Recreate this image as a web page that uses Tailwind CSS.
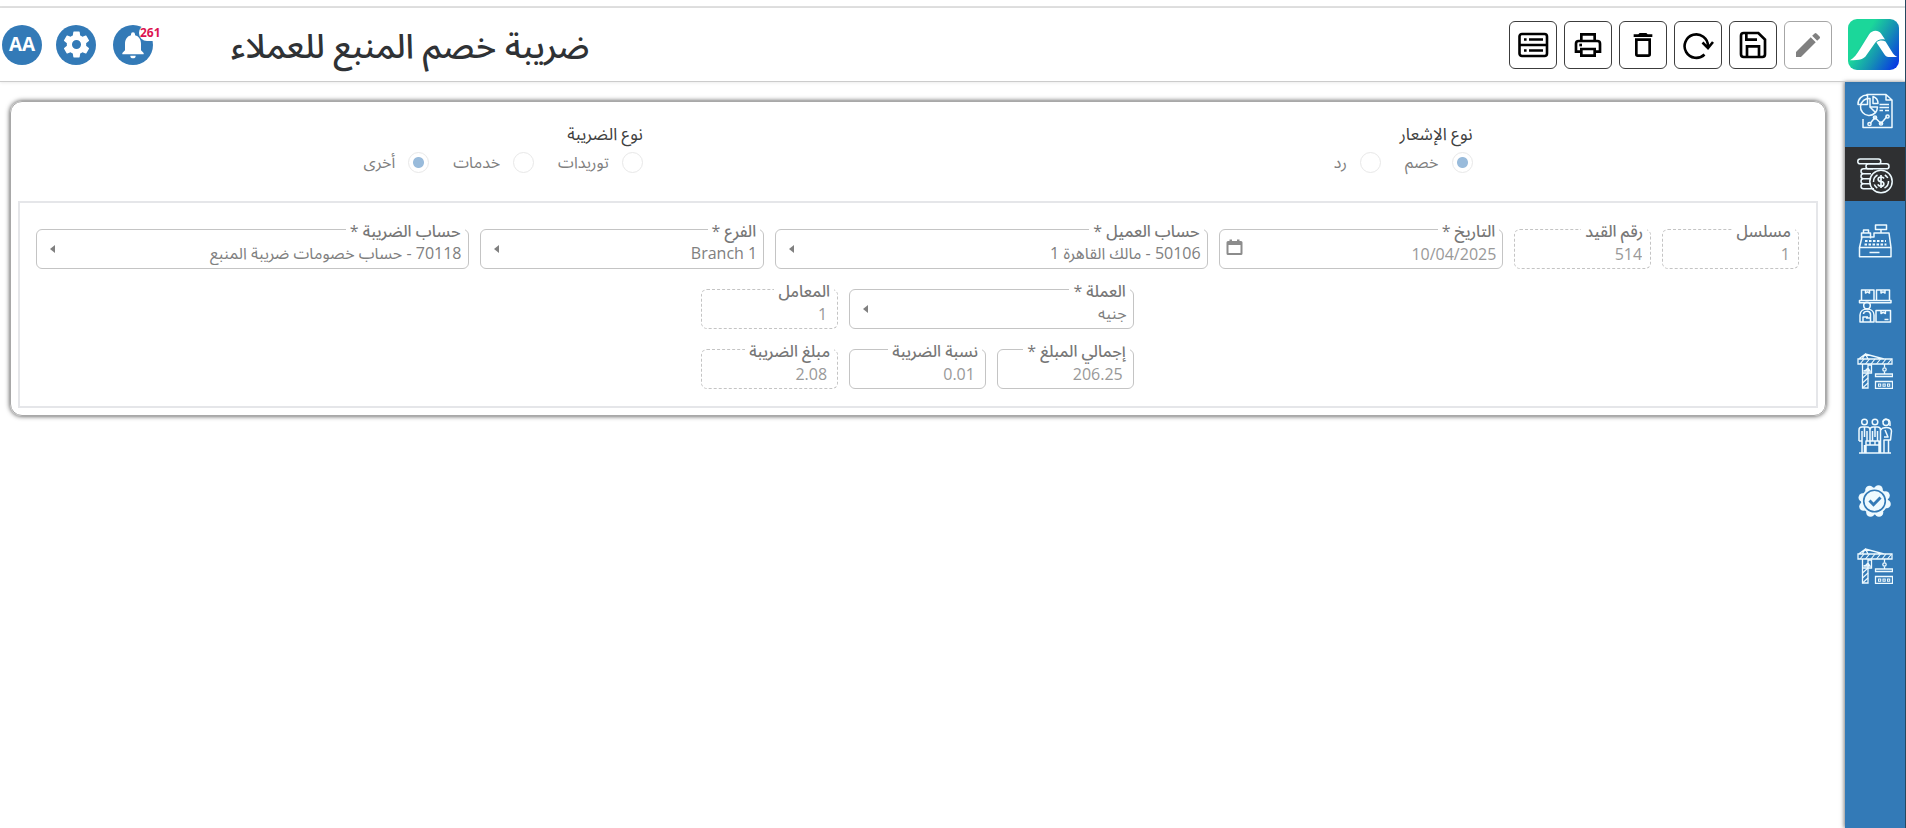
<!DOCTYPE html>
<html lang="ar" dir="rtl">
<head>
<meta charset="utf-8">
<meta name="viewport" content="width=device-width, initial-scale=1">
<title>ضريبة خصم المنبع للعملاء</title>
<script src="https://cdn.jsdelivr.net/npm/@tailwindcss/browser@4"></script>
</head>
<body class="flex min-h-screen flex-col border-r border-[#27485f] bg-white font-['Open_Sans','Noto_Sans_Arabic','DejaVu_Sans',sans-serif] text-[16px] text-[#808080]">

<!-- shared symbols -->
<svg class="hidden" aria-hidden="true">
  <symbol id="crane" viewBox="0 0 36 36" fill="none" stroke="currentColor" stroke-width="1.300">
    <path d="M1 6h34v5H1z M5 6 8.500 1 11 6 M1 6.500 8.500 1 27 6"/>
    <path stroke-width="1.100" d="M3 11l4-5M8.500 11l4-5M14 11l4-5M19.500 11l4-5M25 11l4-5M30.500 11l4-5"/>
    <path d="M5.500 11V35H11V11M11 12h3.500v8H5.500M6.500 18h6.500l-2-3-2 2z"/>
    <path stroke-width="1.100" d="M5.500 25 11 20M5.500 30 11 25M5.500 35 11 30"/>
    <path d="M27.500 11V14.500M27.500 18.500v2.500"/><circle cx="27.500" cy="16.500" r="1.700"/>
    <path d="M18.500 21h17v2.500h-17zM18.500 28.500h17v7h-17z"/>
    <path stroke-width="1.100" d="M21.500 31h2.200v2.200h-2.200zM26 31h2.200v2.200H26zM30.500 31h2.200v2.200h-2.200z"/>
  </symbol>
</svg>

<div class="h-2 border-b-2 border-[#e0e0e0]"></div>

<header class="z-10 flex h-[74px] items-center border-b border-[#cccccc] px-[2px] shadow-[0_1px_3px_rgba(0,0,0,0.08)]">
  <a href="#" aria-label="الرئيسية" class="ms-[4px] block">
    <svg class="size-[51px]" viewBox="0 0 51 51">
      <defs>
        <linearGradient id="lg" x1="0" y1=".25" x2="1" y2=".85"><stop offset=".28" stop-color="#1bd79a"/><stop offset=".62" stop-color="#1590b4"/><stop offset="1" stop-color="#0838e4"/></linearGradient>
      </defs>
      <rect width="51" height="51" rx="9" fill="url(#lg)"/>
      <path d="M2 41.300C6 39 9 35 12 30L21 15.500C24 11 30 10.500 33 14.500L37 20.500C33 19.500 29 20.500 27 24L18.500 36C16 40 12 41.300 2 41.300Z" fill="#fff"/>
      <path d="M28.500 23.500C30.500 21.300 34.500 21 37.500 22.500L45 34.500C46.500 36.500 48 37.500 49.500 38H40.500C38.500 38 37.500 37 36.500 35.500Z" fill="#fff"/>
    </svg>
  </a>
  <div class="ms-4 flex gap-[7px]">
    <button type="button" disabled aria-label="تعديل" class="grid size-12 place-items-center rounded-md border border-[#a6a6a6] text-[#808080]">
      <svg class="size-8" viewBox="0 0 24 24" fill="currentColor"><path d="M3 17.250V21h3.750L17.810 9.940l-3.750-3.750zM20.710 7.040a1 1 0 0 0 0-1.410l-2.340-2.340a1 1 0 0 0-1.410 0l-1.830 1.830 3.750 3.750z"/></svg>
    </button>
    <button type="button" aria-label="حفظ" class="grid size-12 place-items-center rounded-md border border-[#3c3c3c] text-black">
      <svg class="size-8" viewBox="0 0 24 24" fill="none" stroke="currentColor" stroke-width="2"><path d="M5 3h11l5 5v11a2 2 0 0 1-2 2H5a2 2 0 0 1-2-2V5a2 2 0 0 1 2-2z"/><path d="M7 3v5h8M7.500 21v-8h9v8"/></svg>
    </button>
    <button type="button" aria-label="تحديث" class="grid size-12 place-items-center rounded-md border border-[#3c3c3c] text-black">
      <svg class="size-8" viewBox="0 0 32 32" fill="none" stroke="currentColor" stroke-width="2.600"><path d="M22.500 25.500A11.700 11.700 0 1 1 26 17M20.500 13.500 26 19l5-6" /></svg>
    </button>
    <button type="button" aria-label="حذف" class="grid size-12 place-items-center rounded-md border border-[#3c3c3c] text-black">
      <svg class="size-8" viewBox="0 0 24 24" fill="currentColor"><path d="M6 19a2 2 0 0 0 2 2h8a2 2 0 0 0 2-2V7H6zM8 9h8v10H8zm7.500-5-1-1h-5l-1 1H5v2h14V4z"/></svg>
    </button>
    <button type="button" aria-label="طباعة" class="grid size-12 place-items-center rounded-md border border-[#3c3c3c] text-black">
      <svg class="size-8" viewBox="0 0 24 24" fill="none" stroke="currentColor" stroke-width="2"><path d="M7 8V4h10v4M7 17H3v-6a2 2 0 0 1 2-2h14a2 2 0 0 1 2 2v6h-4M7 15h10v5H7z"/><path d="M5.500 12h2"/></svg>
    </button>
    <button type="button" aria-label="القائمة" class="grid size-12 place-items-center rounded-md border border-[#3c3c3c] text-black">
      <svg class="size-8" viewBox="0 0 32 32" fill="none" stroke="currentColor" stroke-width="2.600"><rect x="2.500" y="5" width="27.500" height="22" rx="2.500"/><path d="M3 16h27M7 10.500h2.600M12 10.500h14M7 21.500h2.600M12 21.500h14"/></svg>
    </button>
  </div>

  <h1 class="ms-auto me-[78px] text-[34px] leading-10 font-medium whitespace-nowrap text-[#2f3235]">ضريبة خصم المنبع للعملاء</h1>
  <button type="button" aria-label="الإشعارات" class="relative me-[17px] grid size-10 place-items-center rounded-full bg-[#337ab7] text-white">
    <svg class="size-8" viewBox="0 0 24 24" fill="currentColor"><path d="M12 22a2 2 0 0 0 2-2h-4a2 2 0 0 0 2 2zm6-6v-5c0-3.070-1.640-5.640-4.500-6.320V4a1.500 1.500 0 0 0-3 0v.680C7.630 5.360 6 7.920 6 11v5l-2 2v1h16v-1z"/></svg>
    <span dir="ltr" class="absolute top-0 left-[26px] rounded-full bg-white px-px text-[12px] leading-4 font-bold text-[#dc1450]">261</span>
  </button>
  <button type="button" aria-label="الإعدادات" class="me-[14px] grid size-10 place-items-center rounded-full bg-[#337ab7] text-white">
    <svg class="size-[31px]" viewBox="0 0 24 24" fill="currentColor"><path d="M19.430 12.980c.04-.320.070-.640.070-.980s-.030-.660-.070-.980l2.110-1.650a.5.5 0 0 0 .120-.640l-2-3.460a.5.5 0 0 0-.610-.220l-2.490 1a7.300 7.300 0 0 0-1.690-.980l-.380-2.650A.49.49 0 0 0 14 2h-4a.49.49 0 0 0-.490.420l-.380 2.650c-.610.250-1.170.590-1.690.980l-2.490-1a.49.49 0 0 0-.610.220l-2 3.460a.49.49 0 0 0 .120.640l2.110 1.650c-.040.320-.070.650-.070.980s.030.660.070.980l-2.110 1.650a.5.5 0 0 0-.120.640l2 3.460c.120.220.390.300.610.220l2.490-1c.520.400 1.080.730 1.690.980l.380 2.650c.030.240.240.420.490.420h4c.250 0 .460-.180.490-.420l.380-2.650a7.300 7.300 0 0 0 1.690-.980l2.490 1c.230.090.490 0 .610-.220l2-3.460a.5.5 0 0 0-.120-.640zM12 15.500a3.500 3.500 0 1 1 0-7 3.500 3.500 0 0 1 0 7z"/></svg>
  </button>
  <button type="button" class="grid size-10 place-items-center rounded-full bg-[#337ab7] text-[19px] font-bold text-white">AA</button>
</header>

<div class="flex grow">
  <nav aria-label="الوحدات" class="flex w-[60px] shrink-0 flex-col gap-[11px] bg-[#337ab7] text-[#eefaff] shadow-[-1px_0_4px_rgba(0,0,0,0.5)]">
    <a href="#" aria-label="التقارير" class="grid h-[54px] place-items-center pt-1">
      <svg class="size-9" viewBox="0 0 36 36" fill="none" stroke="currentColor" stroke-width="1.500" stroke-linejoin="round"><path d="M10 3V1.500h19L35 7v27.500H6V26M29 1.500V7h6"/><path d="M13 5.500A8.500 8.500 0 1 0 20.500 14H13z" /><path d="M10.500 2A9 9 0 0 0 1 11.500h9.500zM16 3.500c3 1 5 4 5 7h-5zM13 14l6 6M22.500 11.500H32M22.500 14.500H32M22.500 17.500h3.500M28 17.500h4M13 30.500l5-6 6 6 6-7"/><circle cx="12.500" cy="31" r="1.600"/><circle cx="18" cy="24.500" r="1.600"/><circle cx="24" cy="30.500" r="1.600"/><circle cx="30.500" cy="23.500" r="1.600"/></svg>
    </a>
    <a href="#" aria-label="الحسابات" aria-current="page" class="grid h-[54px] place-items-center bg-[#2f3032] pt-1">
      <svg class="size-9" viewBox="0 0 36 36" fill="none" stroke="currentColor" stroke-width="1.500"><rect x=".8" y="1" width="23" height="4.800" rx="2.400"/><rect x="9" y="5.800" width="23" height="5" rx="2.400"/><path d="M16 10.800H6.500a2.500 2.500 0 0 0 0 5H14M14 15.800H6.500a2.500 2.500 0 0 0 0 5H13M13 20.800H6.500a2.500 2.500 0 0 0 0 5H14M14 25.800H6.500a2.500 2.500 0 0 0 0 5H17"/><circle cx="24" cy="23.500" r="11.200"/><path d="M16.500 24A7.500 7.500 0 0 1 20.500 17M31.500 23a7.500 7.500 0 0 1-4 7M20.300 30a7.500 7.500 0 0 1-3-3.500M27.800 17a7.500 7.500 0 0 1 3 3"/><path stroke-width="1.700" d="M27 20.500c-.5-1-1.500-1.500-3-1.500-3.800 0-3.800 4.300 0 4.500s3.800 4.700 0 4.700c-1.600 0-2.700-.700-3.200-1.800M24 17v13"/></svg>
    </a>
    <a href="#" aria-label="المبيعات" class="grid h-[54px] place-items-center pt-1">
      <svg class="size-9" viewBox="0 0 36 36" fill="none" stroke="currentColor" stroke-width="1.500" stroke-linejoin="round"><path d="M18.500 2h11v4.500h-11zM24 6.500V10M4.500 15.500V10h9v5.500M6.500 10V7h5v3M17 10h15l2 14.500H2.500L5 14h12zM2.500 24.500h31.500v9.300H2.500zM12.500 29.500h10"/><path stroke-width="2.200" stroke-dasharray="2.500 1.500" d="M8 18h21M7.500 21.500h22"/></svg>
    </a>
    <a href="#" aria-label="المخازن" class="grid h-[54px] place-items-center pt-1">
      <svg class="size-9" viewBox="0 0 36 36" fill="none" stroke="currentColor" stroke-width="1.500" stroke-linejoin="round"><path d="M4.500 12V2h12.500v10M19.500 12V2h13v10M8.500 2v3l2-1.200 2 1.200V2M24 2v3l2-1.200L28 5V2M2.500 12.500H34v2.300H2.500zM19 22.500h14.500V34H19zM24 22.500v3l2.200-1.200 2.200 1.200v-3M27.500 31.500h4"/><circle cx="10" cy="17.500" r="3.300"/><path d="M3 34v-7c0-8 14-8 14 0v7zM6 34v-5h5M6.500 26c0-3 6-4 7 0v4H9M13.500 30v4"/></svg>
    </a>
    <a href="#" aria-label="المقاولات" class="grid h-[54px] place-items-center pt-1"><svg class="size-9"><use href="#crane"/></svg></a>
    <a href="#" aria-label="الموارد البشرية" class="grid h-[54px] place-items-center pt-1">
      <svg class="size-9" viewBox="0 0 36 36" fill="none" stroke="currentColor" stroke-width="1.500" stroke-linejoin="round"><circle cx="7.500" cy="4" r="2.800"/><circle cx="18" cy="4" r="2.800"/><circle cx="29" cy="4.500" r="3"/><path d="M26 4c0-4 7-4 7 1v3M2 23V12c0-2 1-3 3-3h5c2 0 3 1 3 3v11M13 12c0-2 1-3 3-3h4.500c2 0 3 1 3 3v11M5 13v22M10 13v10M15.500 13v10M20.500 13v10M7.500 9v10M18 9v10M24 12c1-3 10-4 10.500 1l-1 9H27v13M31.500 22v13M28 12l3 7h-4M9 23h13v12H9zM9 27h13M13 23v4M18 23v4M2 23h3M7.500 27v8M23.500 23v12M2 35h32"/></svg>
    </a>
    <a href="#" aria-label="الجودة" class="grid h-[54px] place-items-center pt-1">
      <svg class="size-9" viewBox="0 0 36 36"><g fill="currentColor"><circle cx="17.500" cy="18" r="13.500"/><circle cx="21.500" cy="6.500" r="4.300"/><circle cx="28.500" cy="12.500" r="4.300"/><circle cx="29.500" cy="21" r="4.300"/><circle cx="22" cy="29.500" r="4.300"/><circle cx="13.500" cy="29.500" r="4.300"/><circle cx="6.500" cy="23.500" r="4.300"/><circle cx="5.800" cy="14.500" r="4.300"/><circle cx="12.500" cy="7" r="4.300"/></g><circle cx="17.500" cy="18" r="10.800" fill="none" stroke="#337ab7" stroke-width="1.600"/><path d="M12.500 17.500l4 4.200 7-7.200" fill="none" stroke="#337ab7" stroke-width="3"/></svg>
    </a>
    <a href="#" aria-label="المشروعات" class="grid h-[54px] place-items-center pt-1"><svg class="size-9"><use href="#crane"/></svg></a>
  </nav>

  <main class="grow ps-[19px] pe-[10px] pt-[19px]">
    <form class="rounded-xl border border-[#a8a8a8] px-[7px] pb-[7px] shadow-[0_0_5px_rgba(0,0,0,0.75)]">
      <div class="flex h-[99px] justify-around pt-5">
        <fieldset disabled>
          <legend class="h-7 text-[17px] leading-6 text-[#404040]">نوع الإشعار</legend>
          <div class="flex gap-6">
            <label class="flex items-center gap-[13px] leading-6"><input type="radio" name="notice" checked class="size-[21px] appearance-none rounded-full border border-[#e8e8e8] checked:bg-[radial-gradient(circle,#99bbdb_5px,transparent_6px)]">خصم</label>
            <label class="flex items-center gap-[13px] leading-6"><input type="radio" name="notice" class="size-[21px] appearance-none rounded-full border border-[#e8e8e8]">رد</label>
          </div>
        </fieldset>
        <fieldset disabled>
          <legend class="h-7 text-[17px] leading-6 text-[#404040]">نوع الضريبة</legend>
          <div class="flex gap-6">
            <label class="flex items-center gap-[13px] leading-6"><input type="radio" name="tax" class="size-[21px] appearance-none rounded-full border border-[#e8e8e8]">توريدات</label>
            <label class="flex items-center gap-[13px] leading-6"><input type="radio" name="tax" class="size-[21px] appearance-none rounded-full border border-[#e8e8e8]">خدمات</label>
            <label class="flex items-center gap-[13px] leading-6"><input type="radio" name="tax" checked class="size-[21px] appearance-none rounded-full border border-[#e8e8e8] checked:bg-[radial-gradient(circle,#99bbdb_5px,transparent_6px)]">أخرى</label>
          </div>
        </fieldset>
      </div>

      <div class="flex flex-col gap-5 border-2 border-[#e5e6e9] px-[11px] pt-[26px] pb-[17px]">
        <div class="flex justify-center">
          <div class="w-1/12 ps-[6px] pe-[5px]"><div class="relative">
            <label for="serial" class="absolute -top-[10px] right-1 bg-white px-1 text-[16px] leading-6 font-medium whitespace-nowrap text-[#777]">مسلسل</label>
            <input id="serial" disabled value="1" class="h-10 w-full rounded-md border border-dashed border-[#c4c4c4] px-2 pt-[10px] text-[#999]">
          </div></div>
          <div class="w-1/12 ps-[6px] pe-[5px]"><div class="relative">
            <label for="entry" class="absolute -top-[10px] right-1 bg-white px-1 text-[16px] leading-6 font-medium whitespace-nowrap text-[#777]">رقم القيد</label>
            <input id="entry" disabled value="514" class="h-10 w-full rounded-md border border-dashed border-[#c4c4c4] px-2 pt-[10px] text-[#999]">
          </div></div>
          <div class="w-2/12 ps-[6px] pe-[5px]"><div class="relative">
            <label for="date" class="absolute -top-[10px] right-1 bg-white px-1 text-[16px] leading-6 font-medium whitespace-nowrap text-[#777]">التاريخ *</label>
            <input id="date" disabled value="10/04/2025" class="h-10 w-full rounded-md border border-[#c4c4c4] px-[6px] pt-[10px] text-[#999]">
            <svg class="absolute top-[10px] left-[7px] size-[17px] text-[#8c8c8c]" viewBox="0 0 17 17" fill="currentColor"><path d="M15 2h-1.500V.5H11V2H6V.5H3.500V2H2a1.500 1.500 0 0 0-1.500 1.500v11A1.500 1.500 0 0 0 2 16h13a1.500 1.500 0 0 0 1.500-1.500v-11A1.500 1.500 0 0 0 15 2zm-.500 12h-12V6h12z"/></svg>
          </div></div>
          <div class="w-3/12 ps-[6px] pe-[5px]"><div class="relative">
            <label for="customer" class="absolute -top-[10px] right-1 bg-white px-1 text-[16px] leading-6 font-medium whitespace-nowrap text-[#777]">حساب العميل *</label>
            <select id="customer" disabled class="h-10 w-full appearance-none rounded-md border border-[#c4c4c4] px-[6px] pt-2 text-[#808080]"><option>50106 - مالك القاهرة 1</option></select>
            <svg class="absolute top-4 left-[14px] h-2 w-[5px] text-[#808080]" viewBox="0 0 5 8" fill="currentColor"><path d="M5 0v8L0 4z"/></svg>
          </div></div>
          <div class="w-2/12 ps-[6px] pe-[5px]"><div class="relative">
            <label for="branch" class="absolute -top-[10px] right-1 bg-white px-1 text-[16px] leading-6 font-medium whitespace-nowrap text-[#777]">الفرع *</label>
            <select id="branch" disabled class="h-10 w-full appearance-none rounded-md border border-[#c4c4c4] px-[6px] pt-2 text-[#808080]"><option>Branch 1</option></select>
            <svg class="absolute top-4 left-[14px] h-2 w-[5px] text-[#808080]" viewBox="0 0 5 8" fill="currentColor"><path d="M5 0v8L0 4z"/></svg>
          </div></div>
          <div class="w-3/12 ps-[6px] pe-[5px]"><div class="relative">
            <label for="taxacc" class="absolute -top-[10px] right-1 bg-white px-1 text-[16px] leading-6 font-medium whitespace-nowrap text-[#777]">حساب الضريبة *</label>
            <select id="taxacc" disabled class="h-10 w-full appearance-none rounded-md border border-[#c4c4c4] px-[6px] pt-2 text-[#808080]"><option>70118 - حساب خصومات ضريبة المنبع</option></select>
            <svg class="absolute top-4 left-[14px] h-2 w-[5px] text-[#808080]" viewBox="0 0 5 8" fill="currentColor"><path d="M5 0v8L0 4z"/></svg>
          </div></div>
        </div>

        <div class="flex justify-center">
          <div class="w-2/12 ps-[6px] pe-[5px]"><div class="relative">
            <label for="currency" class="absolute -top-[10px] right-1 bg-white px-1 text-[16px] leading-6 font-medium whitespace-nowrap text-[#777]">العملة *</label>
            <select id="currency" disabled class="h-10 w-full appearance-none rounded-md border border-[#c4c4c4] px-[6px] pt-2 text-[#808080]"><option>جنيه</option></select>
            <svg class="absolute top-4 left-[14px] h-2 w-[5px] text-[#808080]" viewBox="0 0 5 8" fill="currentColor"><path d="M5 0v8L0 4z"/></svg>
          </div></div>
          <div class="w-1/12 ps-[6px] pe-[5px]"><div class="relative">
            <label for="factor" class="absolute -top-[10px] right-1 bg-white px-1 text-[16px] leading-6 font-medium whitespace-nowrap text-[#777]">المعامل</label>
            <input id="factor" disabled value="1" class="h-10 w-full rounded-md border border-dashed border-[#c4c4c4] px-[10px] pt-[10px] text-[#999]">
          </div></div>
        </div>

        <div class="flex justify-center">
          <div class="w-1/12 ps-[6px] pe-[5px]"><div class="relative">
            <label for="total" class="absolute -top-[10px] right-1 bg-white px-1 text-[16px] leading-6 font-medium whitespace-nowrap text-[#777]">إجمالي المبلغ *</label>
            <input id="total" disabled value="206.25" class="h-10 w-full rounded-md border border-[#c4c4c4] px-[10px] pt-[10px] text-[#999]">
          </div></div>
          <div class="w-1/12 ps-[6px] pe-[5px]"><div class="relative">
            <label for="rate" class="absolute -top-[10px] right-1 bg-white px-1 text-[16px] leading-6 font-medium whitespace-nowrap text-[#777]">نسبة الضريبة</label>
            <input id="rate" disabled value="0.01" class="h-10 w-full rounded-md border border-[#c4c4c4] px-[10px] pt-[10px] text-[#999]">
          </div></div>
          <div class="w-1/12 ps-[6px] pe-[5px]"><div class="relative">
            <label for="amount" class="absolute -top-[10px] right-1 bg-white px-1 text-[16px] leading-6 font-medium whitespace-nowrap text-[#777]">مبلغ الضريبة</label>
            <input id="amount" disabled value="2.08" class="h-10 w-full rounded-md border border-dashed border-[#c4c4c4] px-[10px] pt-[10px] text-[#999]">
          </div></div>
        </div>
      </div>
    </form>
  </main>
</div>
</body>
</html>
